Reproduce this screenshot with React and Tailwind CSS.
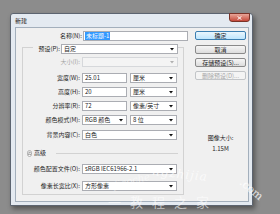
import React from 'react'

const Arrow = ({ dim }) => (
  <svg width="4" height="3" viewBox="0 0 4 3" className="shrink-0">
    <path d="M0 0h4L2 2.5z" fill={dim ? '#b0b0b0' : '#111'} />
  </svg>
)

const Label = ({ children, dim, w = 'w-[58px]' }) => (
  <div className={`${w} shrink-0 text-right pr-[1px] leading-none ${dim ? 'text-[#a3a3a3]' : 'text-[#1e1e1e]'}`}>
    {children}
  </div>
)

const Input = ({ value, w }) => (
  <div className={`${w} h-[10px] shrink-0 border border-[#abadb3] bg-white flex items-center pl-[2px] leading-none`}>
    {value}
  </div>
)

const Select = ({ value, w, dim }) => (
  <div className={`${w} h-[10px] shrink-0 border flex items-center justify-between pl-[2px] pr-[3px] leading-none ${dim ? 'border-[#d6d8db] bg-[#f4f4f4] text-[#a3a3a3]' : 'border-[#abadb3] bg-white'}`}>
    <span>{value}</span>
    <Arrow dim={dim} />
  </div>
)

const Row = ({ className = '', children }) => (
  <div className={`flex items-center h-[10px] ${className}`}>{children}</div>
)

const Button = ({ children, primary, disabled, className = '' }) => (
  <div
    className={`w-[51px] h-[9px] rounded-[2px] border flex items-center justify-center leading-none ${className} ${
      primary
        ? 'border-[#3c7fb1] bg-gradient-to-b from-[#eaf6fd] to-[#bee6fd]'
        : disabled
        ? 'border-[#c2c5c8] bg-[#f4f4f4] text-[#a8a8a8]'
        : 'border-[#8a8a8a] bg-gradient-to-b from-[#f6f6f6] to-[#dcdcdc]'
    }`}
  >
    {children}
  </div>
)

export default function App() {
  return (
    <div className="relative w-[280px] h-[214px] overflow-hidden bg-[#8c8c8c] pt-[13px] pl-[10px] text-[6px] text-[#1e1e1e] font-['Noto_Sans_CJK_SC','Noto_Sans',sans-serif]">
      {/* window */}
      <div className="relative w-[243px] h-[193px] border border-[#5c6470] rounded-t-[3px] bg-[#e4eaf1] flex flex-col pl-[4px] pr-[3px] pb-[3px] shadow-[2px_3px_5px_rgba(0,0,0,0.4)]">
        <div className="h-[13px] shrink-0 flex items-center text-[#222] leading-none">新建</div>
        <div className="absolute -top-[1px] right-[2px] w-[21px] h-[9px] rounded-b-[3px] border border-[#7a3328] bg-gradient-to-b from-[#e8a598] to-[#c4473a] flex items-center justify-center">
          <svg width="5" height="4" viewBox="0 0 5 4">
            <path d="M0.5 0.3L4.5 3.7M4.5 0.3L0.5 3.7" stroke="#fff" strokeWidth="1" />
          </svg>
        </div>

        {/* client */}
        <div className="flex-1 border border-[#a3afbc] bg-[#f0f0f0] flex">
          {/* left */}
          <div className="w-[174px] shrink-0 flex flex-col pt-[3px]">
            <Row>
              <Label w="w-[67px]">名称(N):</Label>
              <div className="w-[105px] h-[10px] border border-[#abadb3] bg-white flex items-center pl-[1px]">
                <span className="bg-[#3399ff] text-white leading-none px-[1px] py-[1px]">未标题-1</span>
              </div>
            </Row>

            <div className="ml-[6px] mt-[6px] w-[162px] h-[148px] border border-[#d2d2d2] flex flex-col">
              <Row className="-mt-[4px] ml-[10px] w-[145px] bg-[#f0f0f0]">
                <Label w="w-[28px]">预设(P):</Label>
                <Select value="自定" w="w-[117px]" />
              </Row>
              <Row className="mt-[3px]">
                <Label dim>大小(I):</Label>
                <Select value="" w="w-[96px] ml-[1px]" dim />
              </Row>
              <Row className="mt-[6px]">
                <Label>宽度(W):</Label>
                <Input value="25.01" w="w-[45px] ml-[1px]" />
                <Select value="厘米" w="w-[47px] ml-[3px]" />
              </Row>
              <Row className="mt-[4px]">
                <Label>高度(H):</Label>
                <Input value="20" w="w-[45px] ml-[1px]" />
                <Select value="厘米" w="w-[47px] ml-[3px]" />
              </Row>
              <Row className="mt-[4px]">
                <Label>分辨率(R):</Label>
                <Input value="72" w="w-[45px] ml-[1px]" />
                <Select value="像素/英寸" w="w-[47px] ml-[3px]" />
              </Row>
              <Row className="mt-[4px]">
                <Label>颜色模式(M):</Label>
                <Select value="RGB 颜色" w="w-[45px] ml-[1px]" />
                <Select value="8 位" w="w-[47px] ml-[3px]" />
              </Row>
              <Row className="mt-[5px]">
                <Label>背景内容(C):</Label>
                <Select value="白色" w="w-[95px] ml-[1px]" />
              </Row>

              <Row className="mt-[8px] pl-[4px] pr-[5px] gap-[2px]">
                <svg width="5" height="7" viewBox="0 0 5 7" className="shrink-0">
                  <rect x="0.5" y="0.5" width="4" height="6" rx="2" fill="#fafafa" stroke="#8c8c8c" strokeWidth="0.6" />
                  <path d="M1.3 3.2L2.5 2L3.7 3.2M1.3 5L2.5 3.8L3.7 5" stroke="#333" strokeWidth="0.6" fill="none" />
                </svg>
                <span className="leading-none">高级</span>
                <div className="flex-1 h-px bg-[#d2d2d2] ml-[8px]" />
              </Row>

              <Row className="mt-[6px]">
                <Label>颜色配置文件(O):</Label>
                <Select value="sRGB IEC61966-2.1" w="w-[95px] ml-[1px]" />
              </Row>
              <Row className="mt-[7px]">
                <Label>像素长宽比(X):</Label>
                <Select value="方形像素" w="w-[95px] ml-[1px]" />
              </Row>
            </div>
          </div>

          {/* right */}
          <div className="flex-1 flex flex-col pl-[5px] pt-[3px]">
            <Button primary>确定</Button>
            <Button className="mt-[5px]">取消</Button>
            <Button className="mt-[4px]">存储预设(S)...</Button>
            <Button className="mt-[4px]" disabled>删除预设(D)...</Button>
            <div className="w-[51px] mt-[55px] flex flex-col items-center leading-none gap-[5px]">
              <span>图像大小:</span>
              <span>1.15M</span>
            </div>
          </div>
        </div>
      </div>

      {/* watermark */}
      <div className="absolute left-[114px] top-[176px] -rotate-[14deg] text-[10px] italic text-white/50 font-['DejaVu_Serif',serif] leading-none">
        jiaoche
      </div>
      <div className="absolute left-[152px] top-[168px] rotate-[6deg] text-[12px] italic text-white/70 font-['DejaVu_Serif',serif] tracking-[1px] leading-none">
        ngzhijia
      </div>
      <div className="absolute left-[238px] top-[184px] rotate-[40deg] text-[11px] text-white/80 font-['DejaVu_Serif',serif] leading-none">
        .com
      </div>
      <div className="absolute left-[108px] top-[195px] text-[13px] text-white/60 tracking-[9px] leading-none">
        一教程之家
      </div>
    </div>
  )
}
